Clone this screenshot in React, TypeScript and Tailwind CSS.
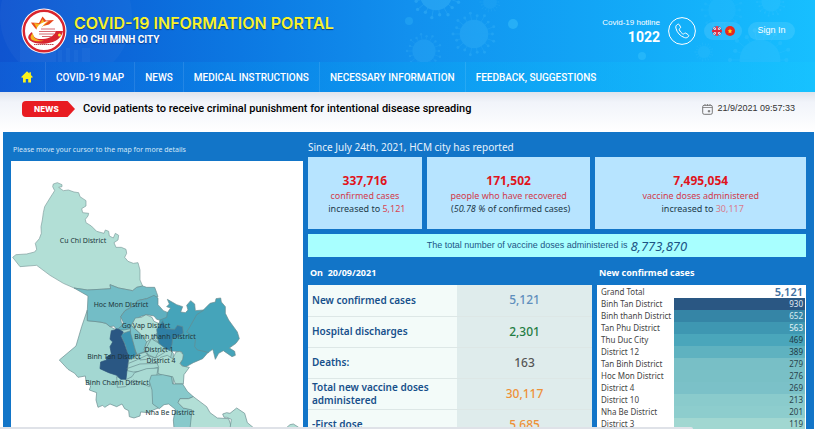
import React from "react";

const navItems = [
  "COVID-19 MAP",
  "NEWS",
  "MEDICAL INSTRUCTIONS",
  "NECESSARY INFORMATION",
  "FEEDBACK, SUGGESTIONS",
];

const dailyRows = [
  { label: "New confirmed cases", value: "5,121", color: "text-[#5f8fbd]" },
  { label: "Hospital discharges", value: "2,301", color: "text-[#1f7d43]" },
  { label: "Deaths:", value: "163", color: "text-[#555555]" },
  { label: "Total new vaccine doses administered", value: "30,117", color: "text-[#ee9138]" },
  { label: "-First dose", value: "5,685", color: "text-[#ee9138]" },
];

const districtRows = [
  { name: "Binh Tan District", value: "930", cell: "bg-[#2a5783] text-[#e4edf4]" },
  { name: "Binh thanh District", value: "652", cell: "bg-[#3585a6] text-[#d8edf2]" },
  { name: "Tan Phu District", value: "563", cell: "bg-[#3e97b2] text-[#e4f4f6]" },
  { name: "Thu Duc City", value: "469", cell: "bg-[#4aa6bb] text-[#1e3a44]" },
  { name: "District 12", value: "389", cell: "bg-[#5fb2c0] text-[#1e3a44]" },
  { name: "Tan Binh District", value: "279", cell: "bg-[#78bfc6] text-[#2b444c]" },
  { name: "Hoc Mon District", value: "276", cell: "bg-[#79c0c6] text-[#2b444c]" },
  { name: "District 4", value: "269", cell: "bg-[#7bc1c8] text-[#2b444c]" },
  { name: "District 10", value: "213", cell: "bg-[#8acbcc] text-[#2b444c]" },
  { name: "Nha Be District", value: "201", cell: "bg-[#8dcdcd] text-[#2b444c]" },
  { name: "District 3", value: "119", cell: "bg-[#a1d7d1] text-[#2b444c]" },
];

const mapLabels = [
  { name: "Cu Chi District", x: 83, y: 243 },
  { name: "Hoc Mon District", x: 121, y: 307 },
  { name: "Go Vap District", x: 146, y: 328 },
  { name: "Binh thanh District", x: 165, y: 339 },
  { name: "District 1", x: 159, y: 352 },
  { name: "Binh Tan District", x: 114, y: 359 },
  { name: "District 4", x: 161, y: 363 },
  { name: "Binh Chanh District", x: 117, y: 385 },
  { name: "Nha Be District", x: 170, y: 415 },
];

function Virus({ x, y, r, o }: { x: number; y: number; r: number; o: number }) {
  const spikes = Array.from({ length: 18 }, (_, i) => (i * Math.PI * 2) / 18);
  return (
    <g opacity={o} fill="#5fd0ff" stroke="#5fd0ff">
      <circle cx={x} cy={y} r={r * 0.68} stroke="none" />
      {spikes.map((a, i) => {
        const l = i % 2 ? r : r * 0.88;
        return (
          <g key={i}>
            <line x1={x} y1={y} x2={x + Math.cos(a) * l} y2={y + Math.sin(a) * l} strokeWidth="0.7" />
            <circle cx={x + Math.cos(a) * l} cy={y + Math.sin(a) * l} r={r * 0.07} stroke="none" />
          </g>
        );
      })}
    </g>
  );
}

function HeaderArt() {
  return (
    <svg className="absolute inset-0 h-full w-full" viewBox="0 0 815 62" preserveAspectRatio="xMidYMid slice" aria-hidden="true">
      <circle cx="66" cy="16" r="66" fill="#ffffff" opacity="0.03" />
      <path d="M20 62V42q20 14 36 0V62M58 62V50h4v12M66 62V48h4v14M74 62V50h4v12M82 62V48h8v14" fill="#6fb6ff" opacity="0.07" />
      <Virus x={436} y={-6} r={24} o={0.24} />
      <Virus x={474} y={34} r={21} o={0.18} />
      <Virus x={424} y={51} r={17} o={0.15} />
      <Virus x={490} y={2} r={10} o={0.1} />
      <Virus x={722} y={10} r={20} o={0.1} />
      <Virus x={771} y={2} r={14} o={0.15} />
      <Virus x={760} y={60} r={30} o={0.16} />
      <Virus x={704} y={52} r={9} o={0.12} />
      <circle cx="513" cy="24" r="5" fill="#4cd0ff" opacity="0.35" />
      <circle cx="409" cy="21" r="4" fill="#4cd0ff" opacity="0.2" />
      <circle cx="642" cy="56" r="4" fill="#4cd0ff" opacity="0.3" />
    </svg>
  );
}

function CityLogo() {
  return (
    <svg className="size-[46px] shrink-0" viewBox="0 0 46 46" role="img" aria-label="Ho Chi Minh City">
      <circle cx="23" cy="23" r="22.5" fill="#fff" />
      <circle cx="23" cy="23" r="20.2" fill="#fff" stroke="#d8252f" strokeWidth="2.400" />
      <path d="M10 14.500l8 .5 3.500-6.500 3.500 4 8-.5-5 4.500-6 1.500-5 5.500c-2-3-4-4-7-9z" fill="#e8471c" />
      <path d="M13 15l6 1 2.500-5 2 3.500 4-1-7 6-3 4z" fill="#f6b420" />
      <path d="M28 13c-10 1-14 7-13 14 1 6 7 9 14 8 7-1 12-5 13-12l-8 1c-1 4-4 6-8 6-5 0-7-3-6-7 1-5 3-8 8-10z" fill="#fff" />
      <path d="M11 24c-4 3-5 6-2 8.500 5 4 14 4 21 2 7-2 11-6 12-11.500h-7c-2 5-6 7.500-13 8-6 .5-10-1-11-7z" fill="#d8252f" />
      <path d="M12 25c-3 3-3 5-1 7 3 1.500 8 1.500 12 .7-7-.2-11-2.500-11-7.700z" fill="#f6b420" />
      <path d="M20 21h14M18 23.500h17M18 26h15M21 28.500h10" stroke="#d66a72" strokeWidth="1.200" />
      <circle cx="38.500" cy="27" r="1.500" fill="#ffe13a" />
      <path d="M13 36.500h20" stroke="#b94b50" strokeWidth="1" strokeDasharray="1.500 .5" />
    </svg>
  );
}

function HomeIcon() {
  return (
    <svg className="h-3 w-3" viewBox="0 0 12 12" aria-hidden="true">
      <path d="M6 .3L.2 6l.9.900L2 6.200V11.500H4.800V8h2.400v3.500H10V6.200l.9.700.9-.9L9.900 4V1.300H8.400v1.200z" fill="#f8f21c" />
    </svg>
  );
}

function PhoneIcon() {
  return (
    <svg className="size-7 shrink-0" viewBox="0 0 28 28" fill="none" stroke="#fff" aria-hidden="true">
      <circle cx="14" cy="14" r="13.400" strokeWidth="1" />
      <path d="M9.800 7.300c-1.700.8-2.300 2-1.900 3.800 1 4.400 4.300 8 8.600 9.500 1.700.6 3.200.1 4-1.300.4-.7.200-1.200-.4-1.600l-2.200-1.500c-.6-.4-1.100-.3-1.500.2-.6.800-1.200.9-2 .3-1.300-1-2.300-2.200-3-3.700-.3-.7-.1-1.200.6-1.600.6-.3.800-.8.5-1.400L11.300 7.700c-.3-.6-.8-.7-1.500-.4z" strokeWidth="1" />
    </svg>
  );
}

function UkFlag() {
  return (
    <svg className="size-2.5" viewBox="0 0 10 10" aria-hidden="true">
      <clipPath id="uk"><circle cx="5" cy="5" r="5" /></clipPath>
      <g clipPath="url(#uk)">
        <path fill="#26408b" d="M0 0h10v10H0z" />
        <path d="M0 0l10 10M10 0L0 10" stroke="#fff" strokeWidth="1.800" />
        <path d="M0 0l10 10M10 0L0 10" stroke="#e0263c" strokeWidth=".7" />
        <path d="M5 0v10M0 5h10" stroke="#fff" strokeWidth="2.600" />
        <path d="M5 0v10M0 5h10" stroke="#e0263c" strokeWidth="1.800" />
      </g>
    </svg>
  );
}

function VnFlag() {
  return (
    <svg className="size-2.5" viewBox="0 0 10 10" aria-hidden="true">
      <circle cx="5" cy="5" r="5" fill="#e8291c" />
      <path d="M5 2.600l.7 1.600 1.700.2-1.300 1.200.4 1.700L5 6.400 3.500 7.300l.4-1.700-1.300-1.200 1.700-.2z" fill="#ffe21a" />
    </svg>
  );
}

function CalendarIcon() {
  return (
    <svg className="h-[11px] w-[11px]" viewBox="0 0 11 11" fill="none" stroke="#777" aria-hidden="true">
      <rect x=".7" y="1.300" width="9.600" height="9" rx="1.500" />
      <path d="M.7 3.500h9.600M3 0v2M5.500 0v2M8 0v2" strokeWidth=".8" />
      <path d="M6.200 6.500h1.600v1.500H6.200z" fill="#777" strokeWidth=".6" />
    </svg>
  );
}

function DistrictMap() {
  return (
    <svg className="h-[268px] w-full" viewBox="11 161 292 268" preserveAspectRatio="xMinYMin slice" role="img" aria-label="Map of districts">
      <g transform="translate(0 170) scale(0.33333)" stroke="#7d9c9c" strokeWidth="2" strokeLinejoin="round">
        <path fill="#b2dfd6" d="M160 42L172 38 186 44 186 50 176 52 190 62 205 60 222 66 236 68 240 80 258 92 258 108 245 116 248 128 266 130 264 138 256 148 258 158 274 168 290 184 312 190 316 180 326 184 328 198 340 204 346 190 356 196 354 210 342 218 348 232 364 232 378 238 380 250 374 262 384 274 400 280 414 278 420 300 420 330 428 348 410 352 398 362 356 354 330 344 332 356 300 358 262 360 222 354 190 340 150 316 110 286 60 290 38 262 48 254 80 252 104 246 110 238 106 220 118 206 124 190 123 170 127 150 130 128 134 110 150 84 164 62 158 50z" />
      </g>
      <g transform="translate(0 280) scale(0.33333)" stroke="#66898d" strokeWidth="2" strokeLinejoin="round">
        <path fill="#a3d7d2" d="M262 90L245 140 228 198 178 240 204 268 224 280 234 292 256 288 258 304 272 318 268 330 290 338 288 360 294 382 308 376 314 382 330 372 350 380 366 372 374 386 386 392 388 410 402 414 420 408 422 396 446 398 460 390 480 382 520 340 520 220 440 130 350 150 330 140 318 130 300 126 262 122z" />
        <path fill="#73bdc6" d="M222 24L262 30 300 28 332 26 330 14 356 24 398 32 410 22 428 18 440 22 464 22 470 38 474 50 460 52 440 56 412 62 405 76 375 92 362 110 364 128 372 132 350 150 342 138 330 140 318 130 300 126 262 122 262 90 264 48z" />
        <path fill="#5fb0c0" d="M462 46L474 54 474 74 490 92 504 98 502 112 485 122 470 118 462 108 440 104 420 110 400 125 392 146 372 150 350 150 372 132 362 110 375 92 405 76 412 62 440 56z" />
        <path fill="#79c1c9" d="M390 134L420 150 442 166 448 196 438 216 410 224 392 154z" />
        <path fill="#a9dad3" d="M386 240L410 224 438 216 446 190 466 180 480 190 520 200 510 240 474 262 440 272 400 276 382 272z" />
        <path fill="#a9dad3" d="M380 298L396 290 404 278 440 266 474 264 470 290 452 296 448 320 400 300 376 320 352 322 350 290z" />
        <path fill="#3b94b2" d="M362 164L374 158 392 152 398 180 410 222 396 238 386 236 384 226 376 196z" />
        <path fill="#2a5783" stroke="#2a5078" d="M334 152L344 150 350 146 360 150 370 156 362 168 372 190 380 214 386 230 382 262 378 298 362 298 350 286 326 278 300 266 302 246 320 240 318 232 334 222 330 200 338 186 330 178z" />
      </g>
      <g transform="translate(130 280) scale(0.33333)" stroke="#66898d" strokeWidth="2" strokeLinejoin="round">
        <path fill="#45a4ba" d="M112 98L122 84 110 80 118 72 112 58 126 66 140 74 158 80 152 96 166 98 174 90 170 76 182 62 194 72 196 92 220 90 240 70 256 66 258 56 272 54 274 66 286 80 286 100 296 120 322 156 328 176 318 190 298 204 314 214 316 226 306 230 280 212 266 220 256 238 250 214 248 208 232 220 218 236 190 248 165 262 150 252 158 234 156 216 120 212 88 195 80 160 90 120 110 112z" />
        <path fill="none" d="M222 90L200 104 180 140 170 156 190 168 196 180 194 200 202 210 222 214 236 218" />
        <path fill="#79c1c9" d="M0 134L30 160 52 178 56 196 46 214 20 224 2 160z" />
        <path fill="#b2dfd6" d="M4 136L16 114 34 112 48 104 66 112 72 124 90 132 84 158 70 168 70 182 60 192 58 204 46 208 50 186 30 160z" />
        <path fill="#9fd5d0" d="M50 186L64 176 90 192 110 206 84 218 76 234 50 222 42 208z" />
        <path fill="#2f7fa5" d="M82 166L80 148 98 122 108 146 134 148 142 136 158 140 160 160 140 172 128 176 126 194 120 212 104 204 86 190z" />
        <path fill="#aeddd4" d="M138 216L150 214 160 224 158 238 150 250 156 258 178 262 162 284 160 312 136 312 128 290 98 286 84 280 86 262 80 246 92 232 112 226 128 236z" />
        <path fill="#87c9cb" d="M64 286L98 284 124 290 128 312 158 312 172 334 190 350 176 356 150 356 144 368 160 384 186 388 184 446 132 446 130 420 136 388 116 372 102 374 88 386 68 372 66 330 58 304z" />
        <path fill="#b2dfd6" d="M144 368L150 356 176 356 190 350 230 380 240 398 262 414 296 416 306 446 180 446 186 390 160 384z" />
        <path fill="#b2dfd6" d="M278 402L290 398 300 400 320 384 344 400 352 428 374 446 300 446 304 418 290 412 282 412zM466 446L480 434 490 432 506 442 508 452z" />
        <path fill="none" d="M-4 250L20 240 50 226 76 234 106 216M-10 266L30 252 84 250M14 210L30 240 50 238M64 176L46 208 60 236" />
      </g>
      <g className="fill-[#20363b] font-['Noto_Sans',sans-serif] text-[7px]" textAnchor="middle">
        {mapLabels.map((l) => (
          <text key={l.name} x={l.x} y={l.y}>{l.name}</text>
        ))}
      </g>
    </svg>
  );
}

export default function App() {
  return (
    <div className="relative h-screen overflow-hidden bg-white font-['Roboto',sans-serif] text-black">
      <header className="bg-linear-to-r from-[#0f54d0] via-[#1290ee] to-[#17bfff] text-white">
        <div className="relative flex h-[62px] items-center pr-5 pl-[21px]">
          <HeaderArt />
          <div className="relative flex flex-1 items-center gap-[7px]">
            <CityLogo />
            <div>
              <h1 className="font-['Inter',sans-serif] text-[16px] leading-[18px] font-semibold text-[#f8f32b] [text-shadow:0_1px_1px_#0a3c90]">COVID-19 INFORMATION PORTAL</h1>
              <p className="text-[10px] leading-4 font-bold [text-shadow:0_1px_1px_#0a3c90]">HO CHI MINH CITY</p>
            </div>
          </div>
          <div className="relative flex items-center">
            <div className="mr-2 text-right">
              <p className="font-['Liberation_Sans',sans-serif] text-[8px] leading-3">Covid-19 hotline</p>
              <p className="text-[14px] leading-4 font-bold">1022</p>
            </div>
            <PhoneIcon />
            <div className="ml-2 flex h-[18px] w-[38px] items-center justify-center gap-[3px] rounded-full bg-white/10">
              <button aria-label="English"><UkFlag /></button>
              <button aria-label="Tiếng Việt"><VnFlag /></button>
            </div>
            <button className="ml-1.5 h-[18px] w-[47px] rounded-full bg-white/10 font-['Liberation_Sans',sans-serif] text-[9px]">Sign In</button>
          </div>
        </div>
        <nav className="flex h-[30px] items-center bg-linear-to-r from-[#1168dc]/40 to-[#17c4ff]/60 pl-[21px] text-[10px] font-medium">
          <a href="#" aria-label="Home" className="flex h-full items-center pr-3"><HomeIcon /></a>
          {navItems.map((item) => (
            <a key={item} href="#" className="flex h-full items-center border-l border-white/10 px-2.5">{item}</a>
          ))}
        </nav>
      </header>

      <section className="flex h-10 items-center bg-linear-to-b from-[#dfe4ec] via-[#f1f4fa] via-25% to-white pr-5 pb-1.5 pl-[22px]">
        <span className="flex h-4 w-[53px] items-center rounded-l-sm bg-[#e81c22] pl-3 font-['Inter',sans-serif] text-[8px] font-extrabold text-white [clip-path:polygon(0_0,86%_0,100%_50%,86%_100%,0_100%)]">NEWS</span>
        <a href="#" className="ml-2 flex-1 text-[11px] font-medium">Covid patients to receive criminal punishment for intentional disease spreading</a>
        <CalendarIcon />
        <time className="ml-1 font-['Liberation_Sans',sans-serif] text-[9px] text-[#333]">21/9/2021 09:57:33</time>
      </section>

      <main className="mr-px ml-[3px] flex gap-[5px] bg-[#1275c8] pr-2 pl-2 font-['Noto_Sans',sans-serif]">
        <section className="flex-[292] pt-[10px]">
          <p className="mb-[3px] pl-0.5 text-[7px] leading-4 text-[#d5e8f8]">Please move your cursor to the map for more details</p>
          <div className="overflow-hidden bg-white"><DistrictMap /></div>
        </section>

        <section className="flex-[498]">
          <h2 className="pt-[5px] text-[10px] leading-5 text-[#e6f2fc]">Since July 24th, 2021, HCM city has reported</h2>
          <div className="grid grid-cols-[114fr_164fr_211fr] gap-[5px] text-center text-[9px] leading-[14px] text-[#213a4a]">
            <div className="h-[72px] bg-[#b7e4ff] pt-4">
              <p className="text-[12px] leading-4 font-bold text-[#e0141c]">337,716</p>
              <p className="text-[#d23b4c]">confirmed cases</p>
              <p className="pl-1 leading-3">increased to <span className="text-[#d94452]">5,121</span></p>
            </div>
            <div className="h-[72px] bg-[#b7e4ff] pt-4">
              <p className="text-[12px] leading-4 font-bold text-[#e0141c]">171,502</p>
              <p className="text-[#d23b4c]">people who have recovered</p>
              <p className="pl-1 leading-3">(<i>50.78 %</i> of confirmed cases)</p>
            </div>
            <div className="h-[72px] bg-[#b7e4ff] pt-4">
              <p className="text-[12px] leading-4 font-bold text-[#e0141c]">7,495,054</p>
              <p className="text-[#d23b4c]">vaccine doses administered</p>
              <p className="pl-1 leading-3">increased to <span className="text-[#d97b8c]">30,117</span></p>
            </div>
          </div>
          <p className="mt-[5px] flex h-[23px] items-center justify-center gap-[3px] bg-[#a8ffff] font-['Liberation_Sans',sans-serif] text-[9px] text-[#1b5486]">
            The total number of vaccine doses administered is <i className="font-['Noto_Sans',sans-serif] text-[13px] leading-4">8,773,870</i>
          </p>

          <div className="flex gap-[5px]">
            <div className="flex-[284]">
              <h3 className="pl-0.5 pt-[7px] pb-[3px] text-[9px] leading-[18px] font-bold text-white">On&nbsp; 20/09/2021</h3>
              <table className="w-full table-fixed border-collapse">
                <tbody>
                  {dailyRows.map((r) => (
                    <tr key={r.label} className="h-[31px] border-b border-[#dde7e6]">
                      <th scope="row" className="w-[149px] bg-[#f3fbf9] pr-4 pl-1 text-left text-[10px] leading-[13px] font-semibold text-[#17508b]">{r.label}</th>
                      <td className={`bg-[#dfecec] text-center text-[12px] leading-4 font-medium ${r.color}`}>{r.value}</td>
                    </tr>
                  ))}
                </tbody>
              </table>
            </div>
            <div className="flex-[209]">
              <h3 className="pl-0.5 pt-[7px] pb-[3px] text-[9px] leading-[18px] font-bold text-white">New confirmed cases</h3>
              <table className="w-full table-fixed border-collapse border-r border-white bg-white text-[8px] leading-3 text-[#444]">
                <thead>
                  <tr className="h-[13px]">
                    <th scope="row" className="w-[77px] pl-1 text-left font-normal">Grand Total</th>
                    <td className="pr-0.5 text-right text-[11px] font-semibold text-[#42709f]">5,121</td>
                  </tr>
                </thead>
                <tbody>
                  {districtRows.map((r) => (
                    <tr key={r.name} className="h-3">
                      <th scope="row" className="pl-1 text-left font-normal whitespace-nowrap">{r.name}</th>
                      <td className={`pr-0.5 text-right ${r.cell}`}>{r.value}</td>
                    </tr>
                  ))}
                </tbody>
              </table>
            </div>
          </div>
        </section>
      </main>

      <div className="absolute bottom-0 left-0 h-0.5 w-[85%] rounded-tr-sm bg-[#dfe2e8]" />
    </div>
  );
}
